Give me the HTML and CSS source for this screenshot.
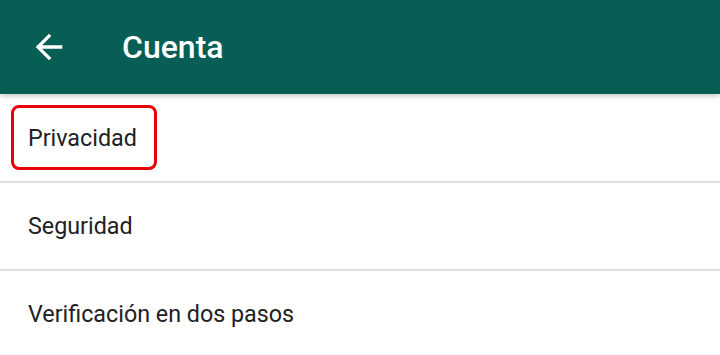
FILE: index.html
```html
<!DOCTYPE html>
<html lang="es">
<head>
<meta charset="utf-8">
<title>Cuenta</title>
<link rel="stylesheet" href="styles.css">
</head>
<body>
<header class="appbar">
  <svg class="back" viewBox="0 0 24 24" width="40" height="40" aria-hidden="true"><path fill="#fff" d="M20 11H7.83l5.59-5.59L12 4l-8 8 8 8 1.41-1.41L7.83 13H20v-2z"/></svg>
  <h1 class="title">Cuenta</h1>
</header>
<ul class="list">
  <li class="item"><span class="label highlighted">Privacidad</span></li>
  <li class="item"><span class="label">Seguridad</span></li>
  <li class="item"><span class="label">Verificación en dos pasos</span></li>
</ul>
</body>
</html>
```
FILE: styles.css
```css
html, body {
  margin: 0;
  padding: 0;
  background: #fff;
  font-family: Roboto, "Noto Sans", sans-serif;
  overflow: hidden;
}
.appbar {
  height: 94px;
  background: #075e54;
  display: flex;
  align-items: center;
  box-shadow: 0 2px 5px rgba(0,0,0,0.22);
  position: relative;
  z-index: 1;
}
.back {
  margin-left: 29px;
  margin-top: -1px;
  flex: none;
}
.title {
  margin: -1px 0 0 53px;
  color: #fff;
  font-weight: 500;
  font-size: 32px;
  line-height: 1;
}
.list {
  list-style: none;
  margin: 0;
  padding: 0;
}
.item {
  height: 88px;
  box-sizing: border-box;
  padding-top: 2px;
  border-bottom: 2px solid #e0e0e0;
  display: flex;
  align-items: center;
  padding-left: 28px;
}
.item:first-child {
  height: 89px;
}
.label {
  font-size: 23.3px;
  color: #212121;
  line-height: 1;
}
.highlighted {
  position: relative;
}
.highlighted::before {
  content: "";
  position: absolute;
  left: -17px;
  top: -22px;
  width: 140px;
  height: 59px;
  border: 3px solid #e8000b;
  border-radius: 8px;
}
```
